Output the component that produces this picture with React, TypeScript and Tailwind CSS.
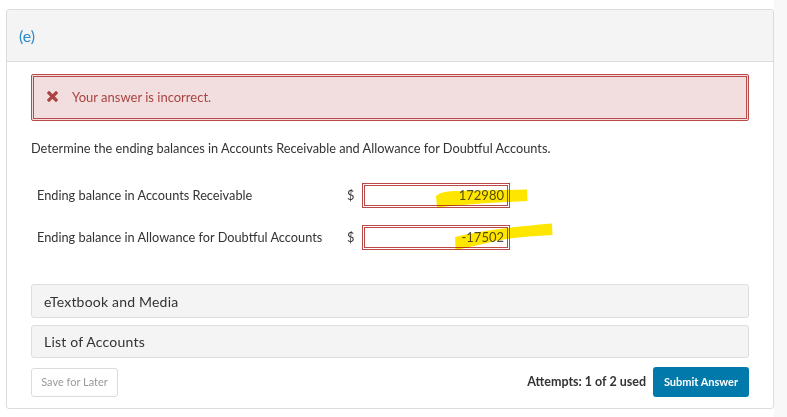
import React from "react";

const font = { fontFamily: "Lato, 'Open Sans', sans-serif" };

function Highlights() {
  return (
    <svg
      className="absolute left-0 top-0 pointer-events-none mix-blend-multiply"
      width={787}
      height={417}
      viewBox="0 0 787 417"
    >
      <path
        d="M436 196 C440 192 448 191 458 191 L527 189.5 L527.5 201 C505 202 470 204 437 207.5 Z"
        fill="#ffe600"
      />
      <path
        d="M455 237 C475 232 500 228 552 223.5 L552.5 235 C530 236 510 238 495 241 C480 245 465 248 455.5 250 Z"
        fill="#ffe600"
      />
    </svg>
  );
}

function AnswerRow({ label, value }: { label: string; value: string }) {
  return (
    <div className="flex items-center h-[25px]">
      <div className="w-[316px] pl-[6px] text-[12.75px] text-[#333]">{label}</div>
      <div className="w-[15px] text-[12.75px] text-[#333]">$</div>
      <div className="w-[148px] h-[25px] border-[3px] border-double border-[#b94a48] bg-white flex items-center justify-end pr-[3px] text-[13px] text-[#555]">
        {value}
      </div>
    </div>
  );
}

export default function App() {
  return (
    <div className="relative w-[787px] h-[417px] bg-white flex" style={font}>
      <div className="w-[774px] pl-[6px] pt-[9px]">
        <div className="w-[768px] h-[400px] border border-[#dcdcdc] rounded-[3px] flex flex-col">
          <div className="h-[52px] bg-[#f4f4f4] border-b border-[#dcdcdc] flex items-center pl-[12px] text-[16px] text-[#2a8ccc] rounded-t-[3px]">
            (e)
          </div>
          <div className="px-[24px] flex flex-col">
            <div className="mt-[12px] h-[47px] border-[3px] border-double border-[#b94a48] bg-[#f2dede] rounded-[2px] flex items-center pl-[13px]">
              <svg width="11" height="11" viewBox="0 0 11 11" className="mr-[14px] -mt-[2px]">
                <path d="M2 2 L9 9 M9 2 L2 9" stroke="#a94442" strokeWidth="3.2" strokeLinecap="square" />
              </svg>
              <span className="text-[13px] text-[#a94442]">Your answer is incorrect.</span>
            </div>
            <div className="mt-[18px] h-[18px] leading-[18px] text-[12.75px] text-[#333]">
              Determine the ending balances in Accounts Receivable and Allowance for Doubtful Accounts.
            </div>
            <div className="mt-[26px] flex flex-col gap-[17px]">
              <AnswerRow label="Ending balance in Accounts Receivable" value="172980" />
              <AnswerRow label="Ending balance in Allowance for Doubtful Accounts" value="-17502" />
            </div>
            <div className="mt-[34px] h-[34px] bg-[#f4f4f4] border border-[#dedede] rounded-[3px] flex items-center pl-[12px] text-[14px] text-[#333] tracking-[0.2px]">
              eTextbook and Media
            </div>
            <div className="mt-[7px] h-[33px] bg-[#f4f4f4] border border-[#dedede] rounded-[3px] flex items-center pl-[12px] text-[14px] text-[#333] tracking-[0.2px]">
              List of Accounts
            </div>
            <div className="mt-[9px] flex items-center">
              <div className="w-[87px] h-[29px] border border-[#dcdcdc] rounded-[3px] flex items-center justify-center text-[11px] text-[#999]">
                Save for Later
              </div>
              <div className="flex-1" />
              <div className="text-[12.5px] font-bold text-[#333] mr-[7px]">Attempts: 1 of 2 used</div>
              <div className="w-[96px] h-[30px] bg-[#0179ab] rounded-[3px] flex items-center justify-center text-[11px] font-bold text-white">
                Submit Answer
              </div>
            </div>
          </div>
        </div>
      </div>
      <div className="flex-1 bg-[#f8f8f8]" />
      <Highlights />
    </div>
  );
}
